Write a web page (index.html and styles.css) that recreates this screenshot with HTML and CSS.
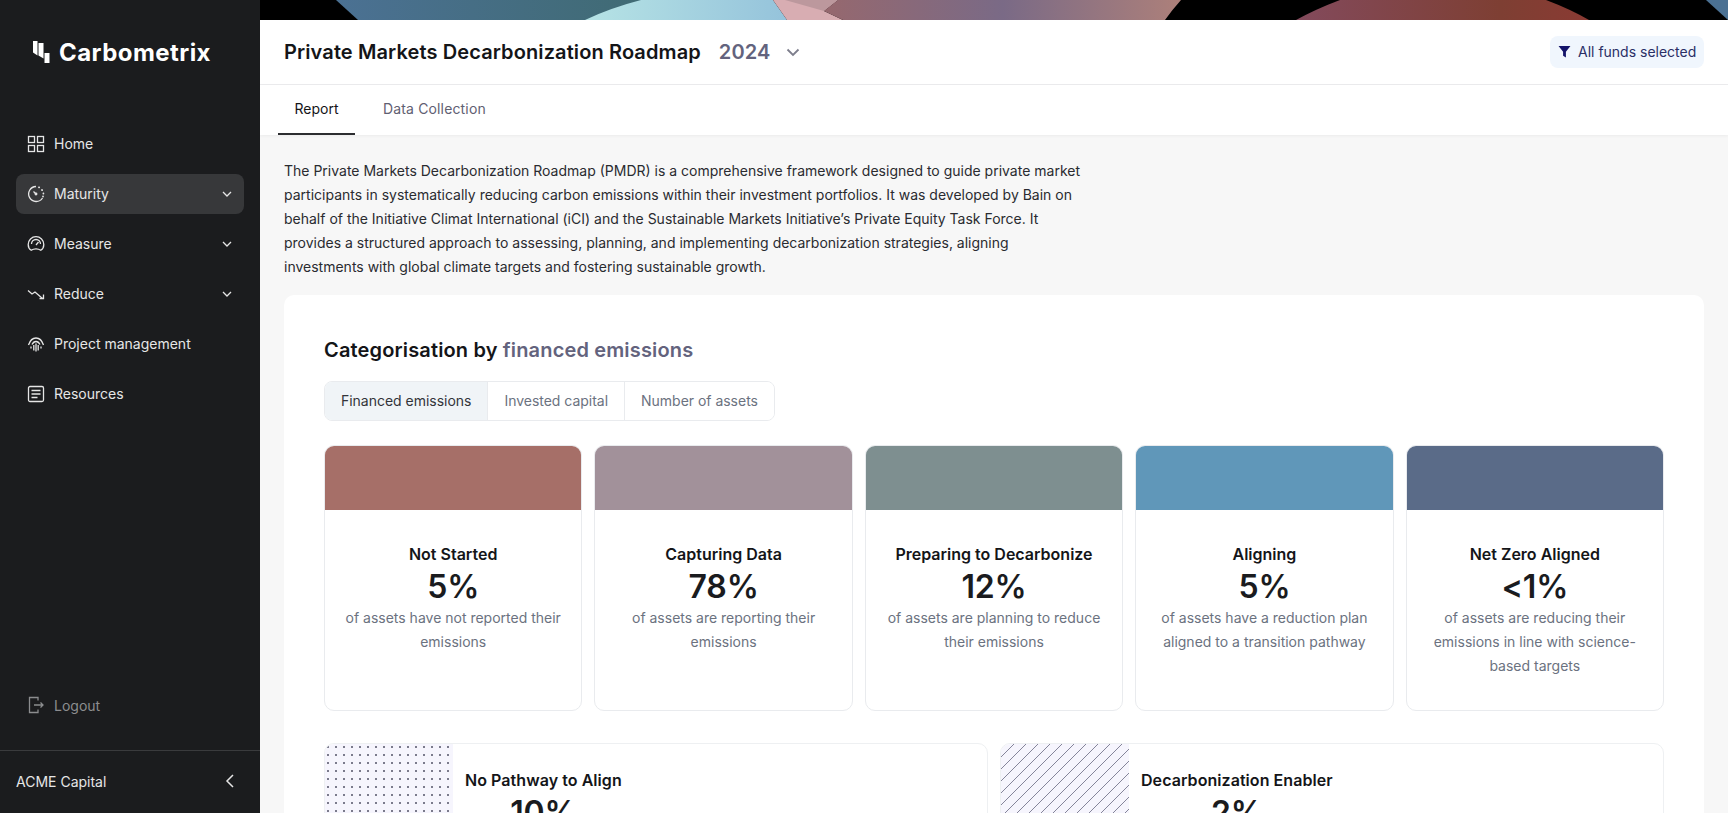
FILE: index.html
```html
<!DOCTYPE html>
<html lang="en">
<head>
<meta charset="utf-8">
<title>Carbometrix</title>
<link rel="stylesheet" href="styles.css">
</head>
<body>
<div class="app">
  <aside class="sidebar">
    <div class="logo">
      <svg class="logo-mark" viewBox="0 0 17 22" width="17" height="22"><path d="M0 0h4.500v14.500L0 11.500z" fill="#fff"/><path d="M5.500 2h5v15.500l-5-3z" fill="#fff"/><path d="M11.500 12h5v10h-5z" fill="#fff"/></svg>
      <span class="logo-text">Carbometrix</span>
    </div>
    <nav class="nav">
      <a class="nav-item"><svg class="nav-icon" viewBox="0 0 18 18"><rect x="1.500" y="1.500" width="6" height="6"/><rect x="10.500" y="1.500" width="6" height="6"/><rect x="1.500" y="10.500" width="6" height="6"/><rect x="10.500" y="10.500" width="6" height="6"/></svg><span>Home</span></a>
      <a class="nav-item active"><svg class="nav-icon" viewBox="0 0 18 18"><path d="M9 1.500A7.500 7.500 0 1 0 15.500 13"/><path d="M12 2.300l.1.100M15 5l.1.100M16.400 8.500v.1M16 11.500v.1" stroke-width="1.800" stroke-linecap="round"/><path d="M6.500 6.500L9 9"/><circle cx="9" cy="9" r=".8"/></svg><span>Maturity</span><svg class="chev" viewBox="0 0 12 12"><path d="M2 4l4 4 4-4"/></svg></a>
      <a class="nav-item"><svg class="nav-icon" viewBox="0 0 18 18"><path d="M4.200 15.200C2.500 14.200 1.200 12 1.200 9.500A7.800 7.800 0 0 1 16.800 9.500c0 2.500-1.300 4.700-3 5.700-1.500-1-3-1.400-4.800-1.400s-3.300.4-4.800 1.400z"/><path d="M4.500 9a4.500 4.500 0 0 1 9 0"/><path d="M9 10l2.500-3"/></svg><span>Measure</span><svg class="chev" viewBox="0 0 12 12"><path d="M2 4l4 4 4-4"/></svg></a>
      <a class="nav-item"><svg class="nav-icon" viewBox="0 0 18 18"><path d="M1 5.500l4 3.500 3-2 7.500 6.500"/><path d="M16.500 9.500v4h-4"/></svg><span>Reduce</span><svg class="chev" viewBox="0 0 12 12"><path d="M2 4l4 4 4-4"/></svg></a>
      <a class="nav-item"><svg class="nav-icon" viewBox="0 0 18 18"><path d="M1.500 10C3 5.500 5.500 3 9 3s6 2.500 7.500 7"/><path d="M5 9.500C6 7.500 7.300 6.500 9 6.500s3 1 4 3"/><path d="M9 8.500v8M6.800 10v5.500M11.200 10v5.500M4 11.500v2M14 11.500v2"/></svg><span>Project management</span></a>
      <a class="nav-item"><svg class="nav-icon" viewBox="0 0 18 18"><rect x="1.500" y="1.500" width="15" height="15" rx="1.500"/><path d="M4.500 5.500h9M4.500 9h9M4.500 12.500h6"/></svg><span>Resources</span></a>
    </nav>
    <a class="logout"><svg class="nav-icon" viewBox="0 0 18 18"><path d="M11 4.500v-3H2.500v15H11v-3"/><path d="M7 9h9M13.500 6.500L16 9l-2.500 2.500"/></svg><span>Logout</span></a>
    <div class="org"><span>ACME Capital</span><svg class="collapse" viewBox="0 0 12 18"><path d="M9 3L3 9l6 6"/></svg></div>
  </aside>
  <main class="main">
    <svg class="banner" viewBox="260 0 1468 20" preserveAspectRatio="none">
      <defs>
        <linearGradient id="g1" x1="0" x2="1" y1="0" y2="0"><stop offset="0" stop-color="#4b7193"/><stop offset="1" stop-color="#3f6a72"/></linearGradient>
        <linearGradient id="g2" x1="0" x2="1" y1="0" y2="0"><stop offset="0" stop-color="#b6e3e5"/><stop offset="1" stop-color="#95c3db"/></linearGradient>
        <linearGradient id="g3" x1="0" x2="1" y1="0" y2="0"><stop offset="0" stop-color="#96686e"/><stop offset=".5" stop-color="#7a6a86"/><stop offset="1" stop-color="#ad807a"/></linearGradient>
        <linearGradient id="g4" x1="0" x2="1" y1="0" y2="0"><stop offset="0" stop-color="#834a5c"/><stop offset=".7" stop-color="#7e3f33"/><stop offset="1" stop-color="#8a3a33"/></linearGradient>
      </defs>
      <rect x="260" y="0" width="1468" height="20" fill="#000"/>
      <path d="M336 0L358 20H600L660 0Z" fill="url(#g1)"/>
      <path d="M641 0Q610 8 585 20H787L773 0Z" fill="url(#g2)"/>
      <path d="M773 0H838L824 11L843 20H787Z" fill="#d8adb2"/>
      <path d="M785 0H838L824 11Z" fill="#bc989d"/>
      <path d="M838 0H1181Q1172 10 1165 20H843L824 11Z" fill="url(#g3)"/>
      <path d="M1340 0H1546Q1570 9 1589 20H1296Q1316 9 1340 0Z" fill="url(#g4)"/>
      <path d="M1706 0H1728V20Z" fill="#4b7193"/>
    </svg>
    <header class="topbar">
      <div class="title-group">
        <h1>Private Markets Decarbonization Roadmap</h1>
        <span class="year">2024</span>
        <svg class="year-chev" viewBox="0 0 16 16"><path d="M2.500 5.500L8 11l5.500-5.500"/></svg>
      </div>
      <div class="chip"><svg class="funnel" viewBox="0 0 12 12"><path d="M.5 1h11L7.300 6.200V11.500L4.700 10V6.200z"/></svg><span>All funds selected</span></div>
    </header>
    <div class="tabs">
      <a class="tab current">Report</a>
      <a class="tab">Data Collection</a>
    </div>
    <div class="content">
      <p class="intro">The Private Markets Decarbonization Roadmap (PMDR) is a comprehensive framework designed to guide private market participants in systematically reducing carbon emissions within their investment portfolios. It was developed by Bain on behalf of the Initiative Climat International (iCI) and the Sustainable Markets Initiative’s Private Equity Task Force. It provides a structured approach to assessing, planning, and implementing decarbonization strategies, aligning investments with global climate targets and fostering sustainable growth.</p>
      <section class="panel">
        <h2>Categorisation by <span>financed emissions</span></h2>
        <div class="segments">
          <button class="seg on">Financed emissions</button>
          <button class="seg">Invested capital</button>
          <button class="seg">Number of assets</button>
        </div>
        <div class="stages">
          <article class="stage"><div class="swatch c1"></div><div class="stage-body"><h3>Not Started</h3><div class="pct">5%</div><p>of assets have not reported their emissions</p></div></article>
          <article class="stage"><div class="swatch c2"></div><div class="stage-body"><h3>Capturing Data</h3><div class="pct">78%</div><p>of assets are reporting their emissions</p></div></article>
          <article class="stage"><div class="swatch c3"></div><div class="stage-body"><h3>Preparing to Decarbonize</h3><div class="pct">12%</div><p>of assets are planning to reduce their emissions</p></div></article>
          <article class="stage"><div class="swatch c4"></div><div class="stage-body"><h3>Aligning</h3><div class="pct">5%</div><p>of assets have a reduction plan aligned to a transition pathway</p></div></article>
          <article class="stage"><div class="swatch c5"></div><div class="stage-body"><h3>Net Zero Aligned</h3><div class="pct">&lt;1%</div><p>of assets are reducing their emissions in line with science-based targets</p></div></article>
        </div>
        <div class="extras">
          <article class="extra"><div class="pattern dots"></div><div class="extra-body"><h3>No Pathway to Align</h3><div class="pct">10%</div></div></article>
          <article class="extra"><div class="pattern lines"></div><div class="extra-body"><h3>Decarbonization Enabler</h3><div class="pct">2%</div></div></article>
        </div>
      </section>
    </div>
  </main>
</div>
</body>
</html>
```
FILE: styles.css
```css
* { box-sizing: border-box; }
html, body { margin: 0; height: 100%; overflow: hidden; }
body { font-family: Inter, "Liberation Sans", sans-serif; font-size: 14px; color: #141518; background: #f7f7f7; }
h1, h2, h3, p { margin: 0; }
.app { display: flex; height: 813px; }

.sidebar { width: 260px; flex: none; background: #1b1c1e; color: #e6e6e6; display: flex; flex-direction: column; }
.logo { display: flex; align-items: center; gap: 9px; height: 124px; padding: 0 0 20px 33px; }
.logo-text { font-size: 24px; font-weight: 700; color: #fff; letter-spacing: .45px; }
.nav { display: flex; flex-direction: column; gap: 10px; padding: 0 16px; flex: 1; }
.nav-item { display: flex; align-items: center; height: 40px; padding: 0 12px; gap: 9px; border-radius: 8px; line-height: 20px; }
.nav-item.active { background: #37383a; }
.nav-icon { width: 18px; height: 18px; flex: none; fill: none; stroke: currentColor; stroke-width: 1.3; margin-left: -1px; }
.chev { width: 12px; height: 12px; margin-left: auto; margin-right: -1px; fill: none; stroke: #e6e6e6; stroke-width: 1.3; }
.logout { display: flex; align-items: center; gap: 9px; padding: 0 28px; height: 24px; margin-bottom: 33px; color: #8c8d8f; }
.org { display: flex; align-items: center; justify-content: space-between; height: 63px; padding: 0 24px 2px 16px; border-top: 1px solid #3a3b3d; }
.collapse { width: 12px; height: 18px; fill: none; stroke: #e6e6e6; stroke-width: 1.5; }

.main { flex: 1; min-width: 0; display: flex; flex-direction: column; overflow: hidden; }
.banner { display: block; width: 100%; height: 20px; flex: none; }
.topbar { flex: none; height: 65px; background: #fff; border-bottom: 1px solid #ececee; display: flex; align-items: center; justify-content: space-between; padding: 0 24px; }
.title-group { display: flex; align-items: center; }
h1 { font-size: 20px; font-weight: 600; line-height: 28px; letter-spacing: .11px; }
.year { font-size: 20px; font-weight: 600; color: #63637d; margin-left: 18px; letter-spacing: .15px; }
.year-chev { width: 16px; height: 16px; margin-left: 14px; fill: none; stroke: #7d7e8c; stroke-width: 1.8; }
.chip { display: flex; align-items: center; gap: 7px; height: 32px; width: 154px; padding: 0 0 2px 8px; border-radius: 8px; background: #f0f6fd; color: #2a2f66; }
.funnel { width: 13px; height: 13px; margin: 0 0 0 0; fill: #14146a; }

.tabs { flex: none; height: 50px; background: #fff; display: flex; padding: 0 18px; box-shadow: 0 1px 3px rgba(0,0,0,.05); position: relative; }
.tab { width: 77px; display: flex; align-items: center; justify-content: center; color: #5f6072; border-bottom: 2px solid transparent; white-space: nowrap; padding-bottom: 2px; }
.tab + .tab { width: auto; margin-left: 28px; letter-spacing: .15px; }
.tab.current { color: #141518; border-bottom-color: #2c2d30; }

.content { flex: 1; padding: 24px 24px 0; }
.intro { width: 800px; line-height: 24px; margin-bottom: 16px; color: #2a2b30; }
.panel { background: #fff; border-radius: 10px; padding: 41px 40px 40px; }
h2 { font-size: 20px; font-weight: 600; line-height: 28px; letter-spacing: .15px; }
h2 span { color: #63637d; }
.segments { margin-top: 17px; height: 40px; border: 1px solid #e9ebee; border-radius: 8px; overflow: hidden; display: flex; width: 451px; }
.seg { font: inherit; letter-spacing: -.02px; background: #fff; color: #6b7280; border: 0; border-left: 1px solid #e9ebee; padding: 0 16px 1px; white-space: nowrap; flex: none; }
.seg:first-child { border-left: 0; }
.seg.on { background: #f0f4f7; color: #33343a; }
.stages { display: grid; grid-template-columns: repeat(5, 1fr); gap: 12px; margin-top: 24px; }
.stage { border: 1px solid #e9ebee; border-radius: 10px; overflow: hidden; background: #fff; }
.swatch { height: 64px; }
.c1 { background: #a66f68; }
.c2 { background: #a2919a; }
.c3 { background: #7e8f90; }
.c4 { background: #6097b9; }
.c5 { background: #5a6b88; }
.stage-body { padding: 32px 16px; text-align: center; }
h3 { font-size: 16px; font-weight: 600; line-height: 24px; }
.pct { font-size: 32px; font-weight: 600; line-height: 40px; letter-spacing: -.2px; color: #1a1b1e; margin-top: 1px; }
.stage-body p { color: #6b7280; line-height: 24px; margin-top: -1px; }
.extras { display: grid; grid-template-columns: 1fr 1fr; gap: 12px; margin-top: 32px; }
.extra { display: flex; height: 120px; border: 1px solid #eef0f2; border-radius: 10px; overflow: hidden; }
.pattern { width: 128px; flex: none; background-color: #f6f5fd; }
.dots { background-image: radial-gradient(circle, #7b7b8c .9px, transparent 1.2px); background-size: 8px 8px; background-position: -1px -1px; }
.lines { background-image: repeating-linear-gradient(135deg, #85859a 0 .8px, transparent .8px 8.500px); }
.extra-body { padding: 24px 0 0 12px; text-align: center; }
.extra-body h3 { white-space: nowrap; letter-spacing: .06px; }
```
